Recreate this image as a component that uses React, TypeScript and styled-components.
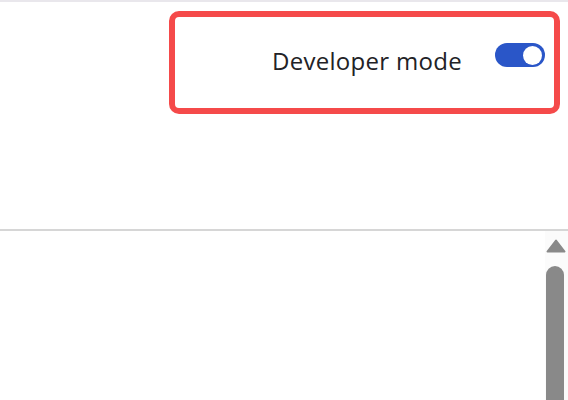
import React from "react";
import styled, { createGlobalStyle } from "styled-components";

const Global = createGlobalStyle`
  html, body { margin: 0; padding: 0; background: #ffffff; }
  body { font-family: "Open Sans", "Noto Sans", "Liberation Sans", sans-serif; overflow: hidden; }
  * { box-sizing: border-box; }
`;

const Page = styled.div`
  width: 568px;
  height: 400px;
  display: flex;
  flex-direction: column;
  background: #ffffff;
`;

const Header = styled.header`
  height: 231px;
  border-top: 2px solid #e9e7ec;
  border-bottom: 2px solid #d6d6d6;
  display: flex;
  justify-content: flex-end;
  align-items: flex-start;
  padding: 9px 8px 0 0;
`;

const Highlight = styled.div`
  width: 391px;
  height: 103px;
  border: 6px solid #f54a4a;
  border-radius: 10px;
  display: flex;
  align-items: center;
  justify-content: flex-end;
  gap: 33px;
  padding: 0 9px 8px 0;
`;

const Label = styled.span`
  font-size: 24px;
  line-height: 30px;
  letter-spacing: 0.3px;
  color: #222226;
  margin-top: 4px;
`;

const Switch = styled.button<{ $on: boolean }>`
  width: 50px;
  height: 24px;
  border: none;
  padding: 0;
  margin-bottom: 8px;
  border-radius: 12px;
  background: ${(p) => (p.$on ? "#2a56c8" : "#b8b8b8")};
  position: relative;
  cursor: pointer;

  &::after {
    content: "";
    position: absolute;
    top: 3px;
    left: ${(p) => (p.$on ? "28px" : "3px")};
    width: 19px;
    height: 19px;
    border-radius: 50%;
    background: #ffffff;
  }
`;

const Body = styled.div`
  flex: 1;
  display: flex;
  min-height: 0;
`;

const Content = styled.div`
  flex: 1;
`;

const ScrollTrack = styled.div`
  width: 23px;
  background: #fbfbfb;
  display: flex;
  flex-direction: column;
  align-items: flex-start;
  padding: 8px 0 0 1px;
  gap: 13px;
`;

const Thumb = styled.div`
  width: 18px;
  flex: 1;
  background: #898989;
  border-radius: 9px 9px 0 0;
`;

export default function App() {
  return (
    <Page>
      <Global />
      <Header>
        <Highlight>
          <Label>Developer mode</Label>
          <Switch $on aria-label="Developer mode" />
        </Highlight>
      </Header>
      <Body>
        <Content />
        <ScrollTrack>
          <svg width="20" height="14" viewBox="0 0 20 14">
            <path d="M10 1.5 L18.5 12.5 H1.5 Z" fill="#898989" stroke="#898989" strokeWidth="2" strokeLinejoin="round" />
          </svg>
          <Thumb />
        </ScrollTrack>
      </Body>
    </Page>
  );
}
